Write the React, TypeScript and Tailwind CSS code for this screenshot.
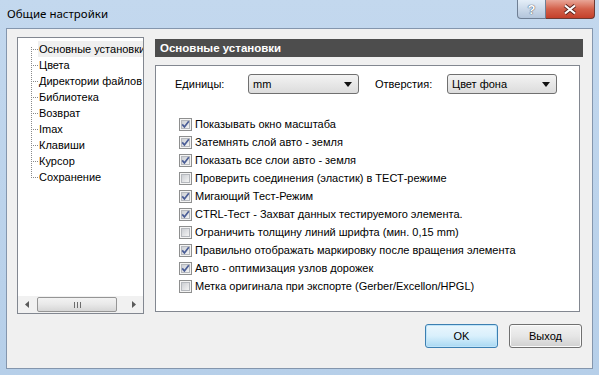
import React from 'react'

const treeItems = [
  'Основные установки',
  'Цвета',
  'Директории файлов',
  'Библиотека',
  'Возврат',
  'Imax',
  'Клавиши',
  'Курсор',
  'Сохранение',
]

const options = [
  { label: 'Показывать окно масштаба', checked: true },
  { label: 'Затемнять слой авто - земля', checked: true },
  { label: 'Показать все слои авто - земля', checked: true },
  { label: 'Проверить соединения (эластик) в ТЕСТ-режиме', checked: false },
  { label: 'Мигающий Тест-Режим', checked: true },
  { label: 'CTRL-Тест - Захват данных тестируемого элемента.', checked: true },
  { label: 'Ограничить толщину линий шрифта (мин. 0,15 mm)', checked: false },
  { label: 'Правильно отображать маркировку после вращения элемента', checked: true },
  { label: 'Авто - оптимизация узлов дорожек', checked: true },
  { label: 'Метка оригинала при экспорте (Gerber/Excellon/HPGL)', checked: false },
]

function TreeConnector({ first, last }: { first: boolean; last: boolean }) {
  return (
    <svg width="8" height="16" className="shrink-0">
      <line x1="1.5" y1={first ? 6 : 0} x2="1.5" y2={last ? 9 : 16} stroke="#8a8a8a" strokeDasharray="1 1" />
      <line x1="3" y1="8.5" x2="8" y2="8.5" stroke="#8a8a8a" strokeDasharray="1 1" />
    </svg>
  )
}

function Checkbox({ checked }: { checked: boolean }) {
  return (
    <svg width="13" height="13" className="shrink-0">
      <defs>
        <linearGradient id="cbg" x1="0" y1="0" x2="1" y2="1">
          <stop offset="0" stopColor="#c9ccd1" />
          <stop offset="1" stopColor="#f6f6f6" />
        </linearGradient>
      </defs>
      <rect x="0.5" y="0.5" width="12" height="12" fill="#f4f4f4" stroke="#8e8f8f" />
      <rect x="2.5" y="2.5" width="8" height="8" fill="url(#cbg)" stroke="#b5b8bd" />
      {checked && (
        <path d="M3.2 6.4 L5.4 8.9 L9.8 3.2" fill="none" stroke="#4a5d96" strokeWidth="1.7" />
      )}
    </svg>
  )
}

function Dropdown({ value, width }: { value: string; width: string }) {
  return (
    <div
      className={`${width} h-[20px] flex items-center justify-between rounded-[3px] border border-[#707070] bg-gradient-to-b from-[#f3f3f3] to-[#dcdcdc] pl-[4px] pr-[6px]`}
    >
      <span>{value}</span>
      <svg width="8" height="5">
        <path d="M0 0 L8 0 L4 5 Z" fill="#111" />
      </svg>
    </div>
  )
}

function Button({ children, primary }: { children: React.ReactNode; primary?: boolean }) {
  return (
    <button
      className={
        primary
          ? 'w-[73px] h-[24px] rounded-[3px] border border-[#3c7fb1] bg-gradient-to-b from-[#eaf6fd] via-[#d9f0fc] to-[#a8d8f2] shadow-[inset_0_0_0_1px_#bfe4f9]'
          : 'w-[73px] h-[24px] rounded-[3px] border border-[#707070] bg-gradient-to-b from-[#f2f2f2] via-[#e6e6e6] to-[#d0d0d0] shadow-[inset_0_0_0_1px_#fbfbfb]'
      }
    >
      {children}
    </button>
  )
}

export default function App() {
  return (
    <div className="w-[599px] h-[375px] flex flex-col bg-gradient-to-b from-[#c3d8ee] to-[#b6cfe9] text-[11px] text-black font-['Liberation_Sans',sans-serif] overflow-hidden">
      {/* Title bar */}
      <div className="h-[28px] shrink-0 flex items-start justify-between pl-[7px] pr-[4px]">
        <span className="mt-[6px] font-['Noto_Sans',sans-serif] text-[11.5px] leading-[16px]">Общие настройки</span>
        <div className="flex">
          <div className="w-[29px] h-[19px] flex items-center justify-center rounded-bl-[4px] border border-t-0 border-[#6f7f94] bg-gradient-to-b from-[#e4eef8] to-[#b3c5db]">
            <span className="text-white font-bold text-[13px] leading-none [text-shadow:0_0_1px_#37475c,0_0_1px_#37475c]">?</span>
          </div>
          <div className="w-[49px] h-[19px] flex items-center justify-center rounded-br-[4px] border border-t-0 border-l-0 border-[#6d3a33] bg-gradient-to-b from-[#e8a597] via-[#d3604a] to-[#c4402b]">
            <svg width="14" height="11">
              <path d="M2 1.5 L12 9.5 M12 1.5 L2 9.5" stroke="#5a2620" strokeWidth="4" />
              <path d="M2 1.5 L12 9.5 M12 1.5 L2 9.5" stroke="#fff" strokeWidth="2.2" />
            </svg>
          </div>
        </div>
      </div>

      {/* Client area */}
      <div className="flex-1 mx-[6px] mb-[6px] border border-[#8496ad] bg-[#f0f0f0] flex flex-col pl-[10px] pr-[8px] pt-[8px]">
        <div className="flex gap-[11px]">
          {/* Tree */}
          <div className="w-[127px] h-[277px] border border-[#828790] bg-white flex flex-col">
            <div className="flex-1 pt-[3px] pl-[12px] overflow-hidden">
              {treeItems.map((item, i) => (
                <div key={item} className="h-[16px] flex items-center whitespace-nowrap">
                  <TreeConnector first={i === 0} last={i === treeItems.length - 1} />
                  <span
                    className={
                      i === 0
                        ? 'h-[16px] leading-[16px] pl-[1px] pr-[2px] bg-[#efefef]'
                        : 'h-[16px] leading-[16px] pl-[1px]'
                    }
                  >
                    {item}
                  </span>
                </div>
              ))}
            </div>
            {/* Horizontal scrollbar */}
            <div className="h-[17px] flex items-center bg-[#f1f1f1]">
              <div className="w-[18px] h-[17px] flex items-center justify-center">
                <svg width="4" height="7"><path d="M4 0 L0 3.5 L4 7 Z" fill="#5a5a5a" /></svg>
              </div>
              <div className="flex-1 h-[17px] flex items-center">
                <div className="w-[80px] h-[15px] ml-[1px] rounded-[2px] border border-[#959595] bg-gradient-to-b from-[#f3f3f3] via-[#e8e8e8] to-[#d6d6d6] flex items-center justify-center gap-[2px]">
                  <span className="w-[1px] h-[6px] bg-[#6d6d6d]" />
                  <span className="w-[1px] h-[6px] bg-[#6d6d6d]" />
                  <span className="w-[1px] h-[6px] bg-[#6d6d6d]" />
                </div>
              </div>
              <div className="w-[18px] h-[17px] flex items-center justify-center">
                <svg width="4" height="7"><path d="M0 0 L4 3.5 L0 7 Z" fill="#5a5a5a" /></svg>
              </div>
            </div>
          </div>

          {/* Right panel */}
          <div className="w-[428px] pt-[2px] flex flex-col">
            <div className="h-[18px] bg-[#4d4d4d] text-white font-bold text-[11.5px] leading-[18px] pl-[5px]">Основные установки</div>
            <div className="mt-[8px] w-[425px] h-[247px] border border-[#828790] bg-white pl-[19px]">
              <div className="flex items-center mt-[8px]">
                <span className="w-[73px]">Единицы:</span>
                <Dropdown value="mm" width="w-[111px]" />
                <span className="w-[72px] ml-[16px]">Отверстия:</span>
                <Dropdown value="Цвет фона" width="w-[110px]" />
              </div>
              <div className="mt-[21px] pl-[4px] flex flex-col">
                {options.map((o) => (
                  <div key={o.label} className="h-[18px] flex items-center gap-[3px] whitespace-nowrap">
                    <Checkbox checked={o.checked} />
                    <span>{o.label}</span>
                  </div>
                ))}
              </div>
            </div>
          </div>
        </div>

        {/* Buttons */}
        <div className="mt-[10px] flex justify-end gap-[11px] pr-[2px]">
          <Button primary>OK</Button>
          <Button>Выход</Button>
        </div>
      </div>
    </div>
  )
}
